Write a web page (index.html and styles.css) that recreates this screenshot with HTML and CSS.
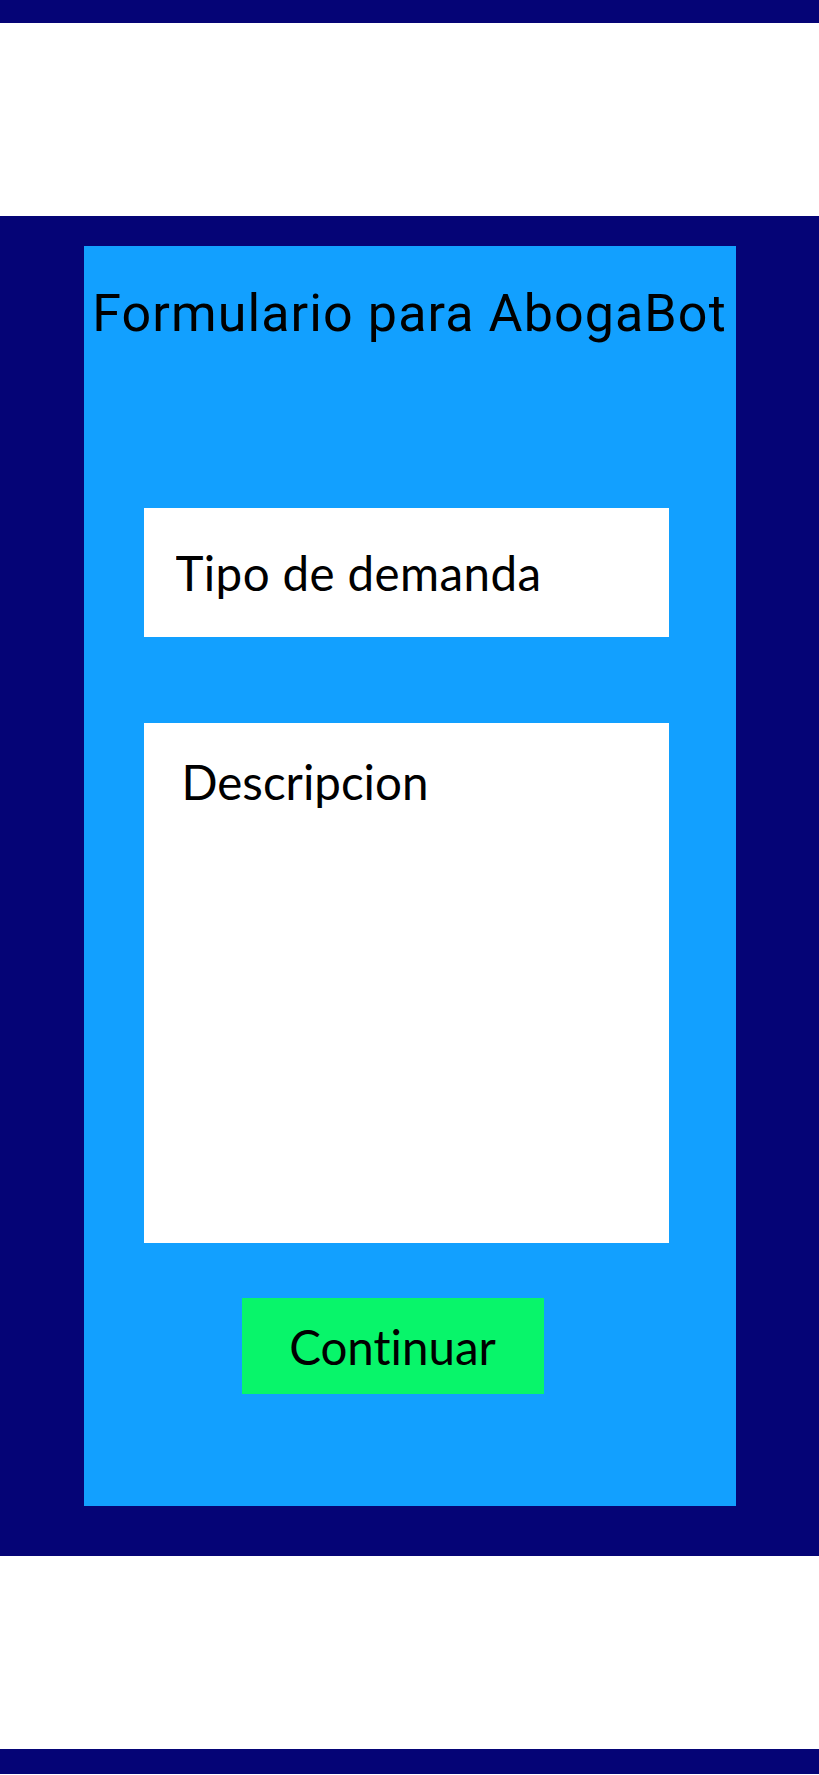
FILE: index.html
```html
<!DOCTYPE html>
<html lang="es">

<head>
	<title>Formulario para AbogaBot</title>
	<meta charset="utf-8">
	<meta name="viewport" content="width=device-width, initial-scale=1.0">
	<link rel="stylesheet" href="styles.css">
</head>

<body>

	<div class="bar bar-top"></div>
	<div class="gap"></div>

	<main class="panel">
		<form class="card" action="#">
			<h1 class="title">Formulario para AbogaBot</h1>

			<input class="field field-type" type="text" name="tipo" placeholder="Tipo de demanda">

			<textarea class="field field-desc" name="descripcion" placeholder="Descripcion"></textarea>

			<button class="btn" type="submit">Continuar</button>
		</form>
	</main>

	<div class="gap"></div>
	<div class="bar bar-bottom"></div>

</body>

</html>
```

FILE: styles.css
```css
*,
*:before,
*:after {
	box-sizing: border-box;
}

/**
 * Layout
 */
body {
	margin: 0;
	font-family: "Lato", "Open Sans", sans-serif;
	font-variant-ligatures: none;
	background-color: #ffffff;
}

.bar {
	background-color: #050476;
}

.bar-top {
	height: 23px;
}

.bar-bottom {
	height: 25px;
}

.gap {
	height: 193px;
}

.panel {
	background-color: #050476;
	padding: 30px 0 50px;
}

.card {
	display: flex;
	flex-direction: column;
	align-items: flex-start;
	width: 652px;
	height: 1260px;
	margin: 0 auto;
	padding-top: 38px;
	background-color: #12a0ff;
}

.title {
	align-self: stretch;
	margin: 0 0 164px;
	font-family: "Roboto", sans-serif;
	font-size: 52px;
	font-weight: 400;
	line-height: 60px;
	letter-spacing: 1.1px;
	text-align: center;
	color: #000000;
}

/**
 * Fields
 */
.field {
	display: block;
	width: 525px;
	margin-left: 60px;
	border: 0;
	border-radius: 0;
	background-color: #ffffff;
	font-family: inherit;
	font-size: 47.5px;
	font-variant-ligatures: none;
	color: #000000;
	outline: none;
}

.field::placeholder {
	color: #000000;
	opacity: 1;
}

.field-type {
	height: 129px;
	padding: 0 0 0 32px;
	margin-bottom: 86px;
	letter-spacing: 0.4px;
}

.field-desc {
	height: 520px;
	padding: 30px 0 0 38px;
	line-height: 1.2;
	resize: none;
	margin-bottom: 55px;
}

/**
 * Buttons
 */
.btn {
	width: 302px;
	height: 96px;
	margin-left: 158px;
	padding: 0;
	border: 0;
	border-radius: 0;
	background-color: #08f56a;
	font-family: inherit;
	font-size: 47.5px;
	font-variant-ligatures: none;
	color: #000000;
}
```
